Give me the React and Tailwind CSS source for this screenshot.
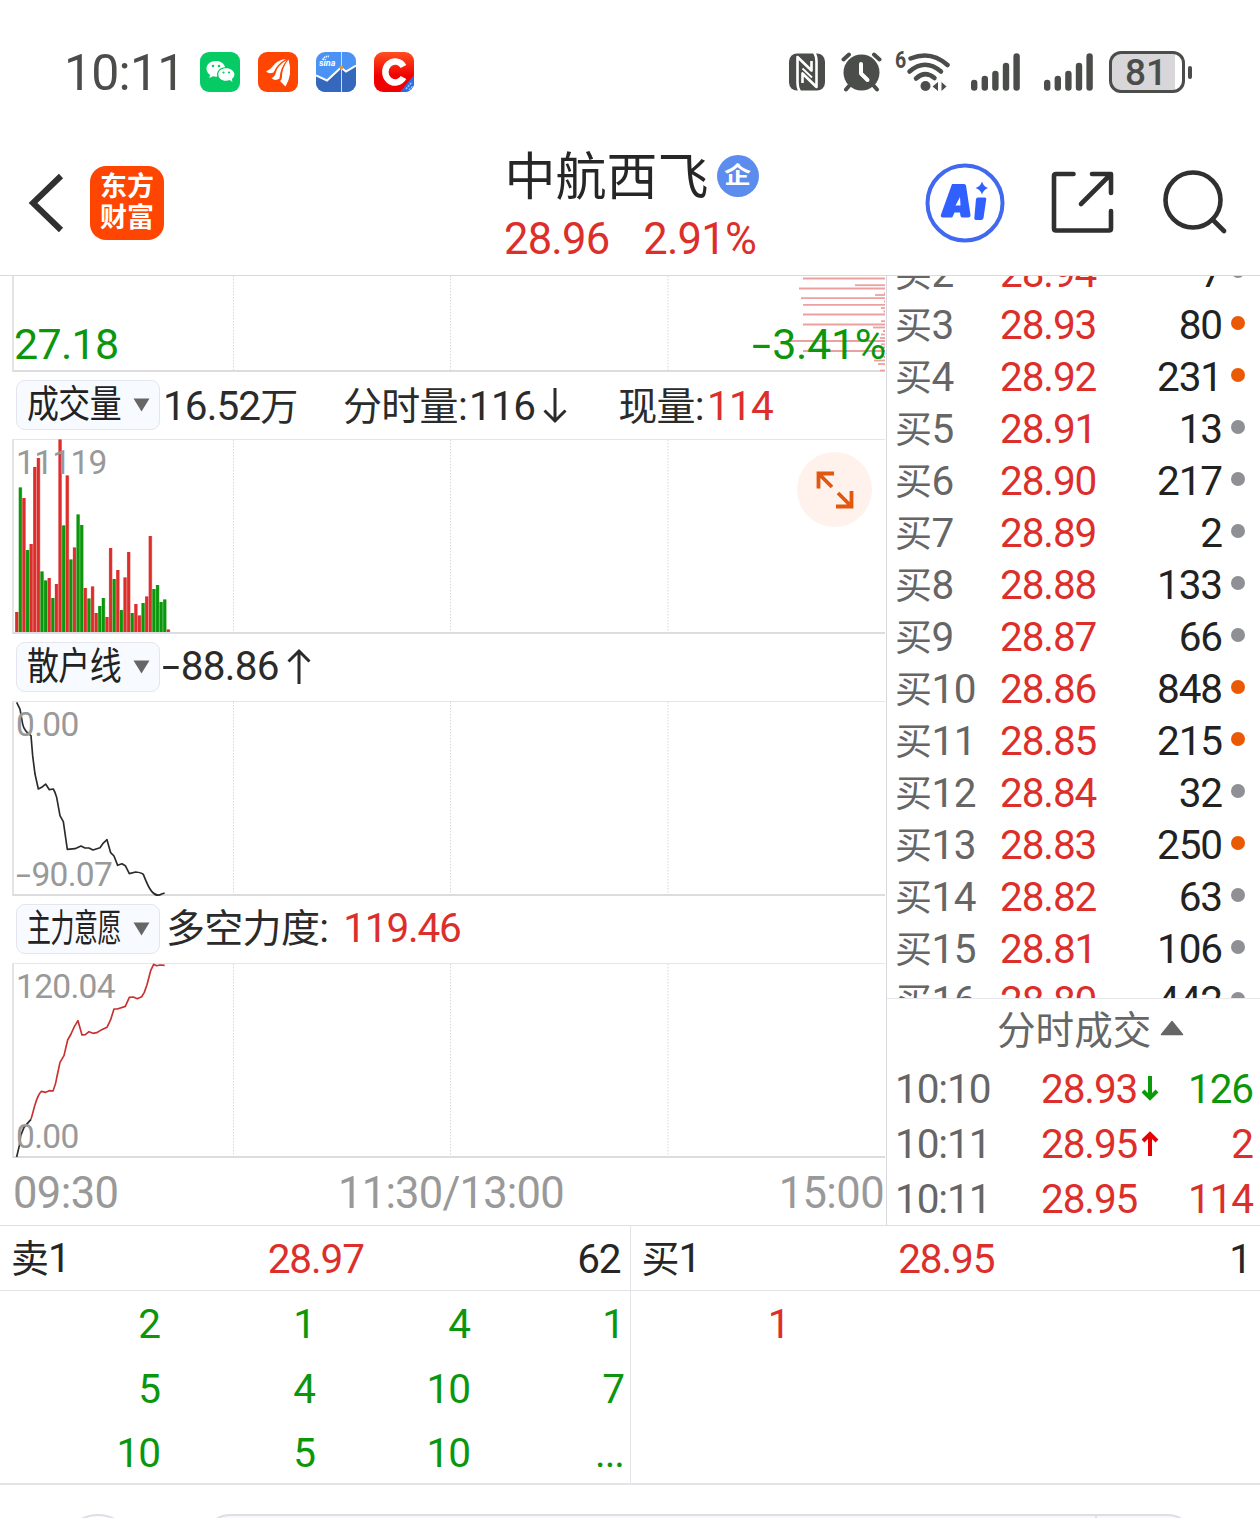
import clsx from 'clsx'

const BIDS = [
  ['买2', '28.94', '7', false],
  ['买3', '28.93', '80', true],
  ['买4', '28.92', '231', true],
  ['买5', '28.91', '13', false],
  ['买6', '28.90', '217', false],
  ['买7', '28.89', '2', false],
  ['买8', '28.88', '133', false],
  ['买9', '28.87', '66', false],
  ['买10', '28.86', '848', true],
  ['买11', '28.85', '215', true],
  ['买12', '28.84', '32', false],
  ['买13', '28.83', '250', true],
  ['买14', '28.82', '63', false],
  ['买15', '28.81', '106', false],
  ['买16', '28.80', '442', false],
]

const TRADES = [
  { time: '10:10', price: '28.93', dir: 'down', vol: '126' },
  { time: '10:11', price: '28.95', dir: 'up', vol: '2' },
  { time: '10:11', price: '28.95', dir: null, vol: '114' },
]

const ASKS = [
  ['2', '1', '4', '1'],
  ['5', '4', '10', '7'],
  ['10', '5', '10', '...'],
]

// one bar per minute: colour and height
const VOLUME =
  'r20 g144.5 r134 g82 r88 r165 r174 g60.5 g51.5 r54 g34 r48 r192.5 g106.5 r156.5 g72.5 r84.5 g117.5 g107 r44 g33.5 r45.5 r19 g26 g34 r15 r84 g53 r62 g22 r54.5 r80 g19 r28 r16.5 g29 r35.5 r96 g43 g47 g30 g32.5 r2.5'
    .split(' ')
    .map((v) => ({ up: v[0] === 'r', h: Number(v.slice(1)) }))

// [y, left edge], all end at the right side of the chart
const CHIPS = [
  [3, 803], [9.7, 855], [13, 799], [18, 884], [19.5, 875], [22.7, 801], [26, 884], [29.3, 803], [32.5, 881], [36, 883.5],
  [39, 803], [45.7, 881], [49, 803], [52, 873], [55.5, 883], [59, 881], [62.5, 880], [65.5, 790], [68.8, 881], [72, 883],
  [75.5, 803], [81.5, 883.5], [85, 874], [88.5, 878], [95, 880],
]

const GREEN = '#0c960c'
const RED = '#dc2f2c'

function StatusIcons() {
  return (
    <div className="flex h-[42px] items-center text-[#4b4d4a]">
      <svg width="36" height="38" viewBox="0 0 36 38">
        <rect x="0" y="0.5" width="36" height="37" rx="8" fill="currentColor" />
        <g fill="none" stroke="#fff" strokeWidth="2.600" strokeLinejoin="round">
          <path d="M11 39 Q8.500 35 8.500 30 V4 L22.500 17.500 V8" />
          <path d="M25 -1 Q27.500 3 27.500 8 V34 L13.500 20.500 V30" />
          <path d="M13.500 15.500 L23 24.500" strokeWidth="1.800" />
        </g>
      </svg>
      <svg className="ml-[16px]" width="41" height="40" viewBox="0 0 41 40">
        <g stroke="currentColor" strokeWidth="4" strokeLinecap="round">
          <path d="M2.500 7.500 L8 2.500 M33 2.500 L38.500 7.500 M8 34 L5 37.500 M33 34 L36 37.500" />
        </g>
        <circle cx="20.500" cy="20.500" r="18" fill="currentColor" />
        <path d="M20 12 V21.500 L26.500 28" fill="none" stroke="#fff" strokeWidth="4" strokeLinecap="round" strokeLinejoin="round" />
      </svg>
      <div className="relative ml-[13px]">
        <svg className="block" width="56" height="42" viewBox="0 0 56 42">
          <g fill="none" stroke="currentColor" strokeWidth="4.500" strokeLinecap="round">
            <path d="M15.500 7.500 Q36 -1 52.500 14" />
            <path d="M14.500 20.500 Q30 7 46 20.500" />
            <path d="M21 27.500 Q30 19 39.500 27" />
          </g>
          <circle cx="30.500" cy="35" r="5" fill="currentColor" />
          <path d="M37.500 35.500 L43 31 V40 Z M51.500 35.500 L46.500 31 V40 Z" fill="currentColor" />
        </svg>
        <span className="absolute -top-[2px] left-0 origin-left scale-x-[0.850] text-[23px] font-bold leading-[24px]">6</span>
      </div>
      {[0, 1].map((n) => (
        <svg key={n} className={n === 0 ? 'ml-[20px]' : 'ml-[24px]'} width="49" height="40" viewBox="0 0 49 40">
          <g stroke="currentColor" strokeWidth="6.400" strokeLinecap="round">
            <path d="M3.200 31 V35.500 M13.800 27 V35.500 M24.400 22 V35.500 M35 14 V35.500 M45.600 4.500 V35.500" />
          </g>
        </svg>
      ))}
      <div className="ml-[16px] flex h-[42px] w-[76px] items-center justify-center rounded-[12px] border-[3px] border-[#4b4d4a] bg-linear-to-r from-[#d9d6d9] from-90% to-white to-90% pr-[2px] text-[37px] font-medium leading-none">
        81
      </div>
      <div className="ml-[3px] h-[13px] w-[4px] rounded-full bg-[#4b4d4a]" />
    </div>
  )
}

function AppIcons() {
  return (
    <div className="flex gap-[18px]">
      <svg width="40" height="40" viewBox="0 0 40 40">
        <rect width="40" height="40" rx="9" fill="#06cb65" />
        <path d="M16 9 C10.500 9 6.500 12.300 6.500 16.700 C6.500 19.300 8 21.500 10 22.800 L9.300 26 L13 24.200 Q15 24.800 17.200 24.600 C16 19 20.500 15 25 15.200 C24.300 11.500 20.500 9 16 9 Z" fill="#fff" />
        <path d="M26 16.300 C21.500 16.300 18.300 19 18.300 22.500 C18.300 26 21.500 28.800 26 28.800 Q28 28.800 29.700 28.100 L32.400 30 L31.900 26.900 C33.500 25.700 34.400 24.200 34.400 22.500 C34.400 19 30.500 16.300 26 16.300 Z" fill="#fff" />
        <g fill="#06cb65">
          <circle cx="13" cy="14" r="1.300" />
          <circle cx="19" cy="14" r="1.300" />
          <circle cx="23.500" cy="20.500" r="1.100" />
          <circle cx="29" cy="20.500" r="1.100" />
        </g>
      </svg>
      <svg width="40" height="40" viewBox="0 0 40 40">
        <rect width="40" height="40" rx="9" fill="#ff4502" />
        <path d="M28 7 Q19 8 15 14 Q12 18 8 19.500 Q11 22.500 15.500 20.500 Q19 12 28 7 Z" fill="#fff" />
        <path d="M29 8 Q20 13 18 20 Q17 25 13.500 26 Q17 29.500 21.500 26.500 Q22 16 29 8 Z" fill="#fff" />
        <path d="M30.500 7.500 Q24 16 24 24 Q24 28 22 29 L27.500 34.500 Q35 22 30.500 7.500 Z" fill="#fff" />
      </svg>
      <svg width="40" height="40" viewBox="0 0 40 40">
        <defs><clipPath id="sina"><rect width="40" height="40" rx="9" /></clipPath></defs>
        <g clipPath="url(#sina)">
          <rect width="40" height="40" fill="#4b92f5" />
          <path d="M0 23 L11 28 L25 15 L30 19 L40 13 V40 H0 Z" fill="#3568bd" />
          <path d="M0 23.500 L11 28.500 L25 15.500 L30 19.500 L40 13.500" fill="none" stroke="#fff" strokeWidth="2" />
          <path d="M25.500 0 V40" stroke="#e8dcc8" strokeWidth="1" />
          <circle cx="25.300" cy="15.500" r="2" fill="#d79a4c" />
          <path d="M7 8 Q8 4 13 4.500" fill="none" stroke="#fff" strokeWidth="1.800" strokeDasharray="1.500 0.800" />
          <text x="3" y="14" fontSize="9" fontWeight="700" fontStyle="italic" fontFamily="Roboto" fill="#fff">sina</text>
        </g>
      </svg>
      <svg width="40" height="40" viewBox="0 0 40 40">
        <defs>
          <clipPath id="cls"><rect width="40" height="40" rx="9" /></clipPath>
          <linearGradient id="clsRed" x1="0" y1="0" x2="0" y2="1"><stop offset="0" stopColor="#ff5020" /><stop offset="0.600" stopColor="#f00000" /></linearGradient>
        </defs>
        <g clipPath="url(#cls)">
          <rect width="40" height="40" fill="url(#clsRed)" />
          <path d="M40 23 V40 H26 Z" fill="#2c6ee0" />
          <path d="M29.500 14.500 A9.800 10.500 0 1 0 29.500 25.500" fill="none" stroke="#fff" strokeWidth="6.500" />
          <path d="M32 37 L38 30 M35 38 L39 34" stroke="#9cc2ff" strokeWidth="1.500" strokeDasharray="2 1" />
        </g>
      </svg>
    </div>
  )
}

function Header() {
  return (
    <header className="flex h-[136px] border-b border-[#dadade]">
      <div className="flex w-[480px] pl-[28px] pt-[26px]">
        <svg className="mt-[7px]" width="36" height="60" viewBox="0 0 36 60">
          <path d="M33 3 L5 30 L33 57" fill="none" stroke="#303030" strokeWidth="6" />
        </svg>
        <div className="ml-[26px] flex h-[74px] w-[74px] flex-col items-center justify-center rounded-[16px] bg-[#ff4502] text-[27px] font-bold leading-[31px] text-white">
          <span>东方</span>
          <span>财富</span>
        </div>
      </div>
      <div className="flex w-[300px] flex-col items-center">
        <div className="flex items-center pl-[3px] pt-[4px]">
          <h1 className="pt-[3px] text-[51px] leading-[61px] text-[#262626]">中航西飞</h1>
          <span className="ml-[8px] flex h-[42px] w-[42px] items-center justify-center rounded-full bg-[#5c8cee] text-[27px] font-bold leading-none text-white">
            <span className="-mt-[2px] scale-y-[0.860]">企</span>
          </span>
        </div>
        <div className="flex gap-[34px] text-[43.500px] leading-[64px] tracking-[-0.800px] text-[#dc2f2c]">
          <span>28.96</span>
          <span>2.91%</span>
        </div>
      </div>
      <div className="flex flex-1 pl-[145px] pt-[23px]">
        <svg width="80" height="80" viewBox="0 0 80 80">
          <circle cx="40" cy="40" r="37.500" fill="none" stroke="#4169f0" strokeWidth="4" />
          <path fillRule="evenodd" d="M27 21 H39 Q40.500 21 41 22.500 L45.500 52 Q45.500 54.500 43 54.500 H37.500 Q36 54.500 35.500 53 L35 49.500 H29.500 L28 53 Q27.500 54.500 26 54.500 H18 Q15 54.500 16 51.500 Z M35 34 L30.500 42.500 H35.500 Z" fill="#3060ff" />
          <path d="M53 34.500 H60 Q61.500 34.500 61.300 36 L58.500 55 Q58 57 56 57 H51 Q49 57 49.300 55 L51 36 Q51.300 34.500 53 34.500 Z" fill="#3060ff" />
          <path d="M57 18.500 Q58.500 23.500 63 25 Q58.500 26.500 57 31.500 Q55.500 26.500 50.500 25 Q55.500 23.500 57 18.500 Z" fill="#3060ff" />
        </svg>
        <svg className="ml-[46px] mt-[8px]" width="64" height="64" viewBox="0 0 64 64">
          <path d="M22.500 3 H5 Q3 3 3 5 V57.500 Q3 59.500 5 59.500 H58 Q60 59.500 60 57.500 V40 M41 3 H60 V22 M59 4 L30 33" fill="none" stroke="#303030" strokeWidth="4.600" strokeLinecap="round" strokeLinejoin="round" />
        </svg>
        <svg className="ml-[48px] mt-[7px]" width="66" height="66" viewBox="0 0 66 66">
          <circle cx="30" cy="30" r="27.500" fill="none" stroke="#303030" strokeWidth="4.600" />
          <path d="M49.500 49.500 L61 61" stroke="#303030" strokeWidth="4.600" strokeLinecap="round" />
        </svg>
      </div>
    </header>
  )
}

function Grid({ height }) {
  return (
    <g>
      {[219.5, 436.5, 654].map((x) => (
        <path key={x} d={`M${x} 0 V${height}`} stroke="#d8d8dc" strokeWidth="1" strokeDasharray="1.500 1.500" />
      ))}
    </g>
  )
}

// numbers are set with a long dash in front
function Negative({ value }) {
  return (
    <span className="whitespace-nowrap">
      <span className="inline-block w-[0.460em] origin-left scale-x-[1.600]">-</span>
      {value}
    </span>
  )
}

function Panel({ children, top, bottom }) {
  return (
    <div className="relative ml-[12px] h-[195px] w-[873px] border-b-2 border-l-2 border-t border-b-[#dcdce0] border-l-[#e4e4e8] border-t-[#e6e6ea] text-[33.500px] leading-[40px] tracking-[-0.700px] text-[#999]">
      <svg className="block overflow-visible" width="871" height="192" viewBox="0 0 871 192">
        <Grid height={192} />
        {children}
      </svg>
      <span className="absolute left-[2px] top-[3px]">{top}</span>
      {bottom && <span className="absolute bottom-[-1px] left-[2px]">{bottom}</span>}
    </div>
  )
}

function Picker({ label }) {
  return (
    <div className="relative -mt-[2px] ml-[16px] h-[50px] w-[144px] rounded-[9px] border border-[#e4e5ee] bg-[#f7faff]">
      <span
        className={clsx(
          'absolute left-[10px] top-0 origin-left whitespace-nowrap text-[38px] leading-[46px] text-[#222]',
          label.length === 3 ? 'scale-x-[0.840]' : 'scale-x-[0.630]',
        )}
      >
        {label}
      </span>
      <svg className="absolute right-[9px] top-[17px]" width="17" height="14" viewBox="0 0 17 14">
        <path d="M0.500 0.500 H16.500 L8.500 13.500 Z" fill="#666" />
      </svg>
    </div>
  )
}

function Arrow({ up, className, width = 3, color = '#2b2b2b', w = 24, h = 36 }) {
  const mid = w / 2
  const head = mid - width / 2
  return (
    <svg className={className} width={w} height={h} viewBox={`0 0 ${w} ${h}`}>
      <path
        d={
          up
            ? `M${mid} ${h} V3 M${mid - head} ${3 + head} L${mid} 3 L${mid + head} ${3 + head}`
            : `M${mid} 0 V${h - 3} M${mid - head} ${h - 3 - head} L${mid} ${h - 3} L${mid + head} ${h - 3 - head}`
        }
        fill="none"
        stroke={color}
        strokeWidth={width}
      />
    </svg>
  )
}

function Charts() {
  return (
    <section className="h-[949px] w-[887px] border-r border-[#d8d8dc]">
      <div className="relative ml-[12px] h-[96px] w-[873px] border-b-2 border-l-2 border-b-[#dcdce0] border-l-[#e4e4e8] text-[43px] leading-[50px] text-[#0c960c]">
        <svg className="block overflow-visible" width="871" height="94" viewBox="0 0 871 94">
          <Grid height={94} />
          {CHIPS.map(([y, x]) => (
            <path key={y} d={`M${x - 14} ${y - 0.5} H871`} stroke="#eda0a0" strokeWidth="1.800" />
          ))}
        </svg>
        <span className="absolute left-0 top-[43px] tracking-[-0.700px]">27.18</span>
        <span className="absolute right-[-1px] top-[43px] tracking-[-0.300px]"><Negative value="3.41%" /></span>
      </div>

      <div className="flex h-[67px] items-center text-[40.500px] leading-[50px] tracking-[-0.700px] text-[#2b2b2b]">
        <Picker label="成交量" />
        <span className="ml-[3px] mt-px w-[180px] tracking-[-0.900px]">16.52<span className="text-[38px]">万</span></span>
        <span className="mt-px"><span className="text-[39px]">分时量</span>:<span className="pl-[2px]">116</span></span>
        <Arrow className="ml-[8px]" />
        <span className="ml-[51px] mt-px"><span className="text-[39px]">现量</span>:<span className="pl-[3px] text-[#dc2f2c]">114</span></span>
      </div>

      <div className="relative">
        <Panel top="11119">
          {VOLUME.map((bar, i) => (
            <g key={i} fill={bar.up ? RED : GREEN}>
              <rect x={1 + i * 3.61} y={192 - bar.h} width="3.600" height={bar.h} opacity="0.550" />
              <rect x={1.3 + i * 3.61} y={192 - bar.h} width="2.800" height={bar.h} />
            </g>
          ))}
        </Panel>
        <button className="absolute left-[797px] top-[13px] flex h-[75px] w-[75px] items-center justify-center rounded-full bg-[#fff1ec]">
          <svg width="38" height="38" viewBox="0 0 38 38">
            <path d="M2.500 17.500 V2.500 H18 M3 3 L16 16 M35.500 20 V35.500 H20 M35 35 L22 22" fill="none" stroke="#e2580f" strokeWidth="3.800" />
          </svg>
        </button>
      </div>

      <div className="flex h-[67px] items-center text-[40.500px] leading-[50px] tracking-[-0.700px] text-[#2b2b2b]">
        <Picker label="散户线" />
        <span className="-mt-[3px] ml-[2px]"><Negative value="88.86" /></span>
        <Arrow up className="-mt-[3px] ml-[8px]" />
      </div>

      <Panel top="0.00" bottom={<Negative value="90.07" />}>
        <path
          transform="translate(-14 -61.300) scale(0.3333)"
          d="M50 185 L60 205 L68 250 Q72 270 93 285 L98 345 L105 400 L115 445 L125 440 L137 430 L148 447 L160 445 Q166 455 170 470 L180 525 L190 543 L202 626 L225 624 L243 616 L255 622 L267 622 L279 628 L300 621 L310 607 L321 597 L332 636 L342 646 L353 674 L366 669 L376 675 L388 699 L407 694 Q425 696 430 701 Q445 740 455 752 Q470 770 485 760 L494 757"
          fill="none"
          stroke="#2b2b2b"
          strokeWidth="5"
          strokeLinejoin="round"
        />
      </Panel>

      <div className="flex h-[67px] items-center text-[40.500px] leading-[50px] tracking-[-0.700px] text-[#2b2b2b]">
        <Picker label="主力意愿" />
        <span className="-mt-[3px] ml-[6px]"><span className="text-[39px]">多空力度</span>:</span>
        <span className="-mt-[3px] ml-[15px] tracking-[-1.200px] text-[#dc2f2c]">119.46</span>
      </div>

      <Panel top="120.04" bottom="0.00">
        <g transform="translate(-14 -63.300) scale(0.3333)" fill="none" strokeWidth="5" strokeLinejoin="round">
          <path d="M50 769 L58 735 L62 705 L72 680 L93 656" stroke="#2b2b2b" />
          <path
            d="M93 656 L105 612 Q115 580 124 572 L137 575 L148 570 L159 571 Q168 550 170 532 L180 485 L192 465 L203 418 L213 400 L223 378 L234 360 L246 403 L256 402 L267 393 L279 398 L290 396 L302 389 L321 380 L332 357 L342 325 L352 325 L376 317 L388 290 L400 289 L412 294 L425 288 L433 275 L441 252 L452 210 L461 191 L470 195 L480 193 L494 194"
            stroke="#c8312f"
          />
        </g>
      </Panel>

      <div className="flex justify-between pl-[13px] pr-[2px] pt-[2px] text-[43.500px] leading-[68px] tracking-[-0.600px] text-[#999]">
        <span>09:30</span>
        <span className="pl-[5px] tracking-[-0.800px]">11:30/13:00</span>
        <span>15:00</span>
      </div>
    </section>
  )
}

function OrderBook() {
  return (
    <section className="h-[949px] flex-1">
      <div className="h-[723px] overflow-hidden border-b border-[#e8e8ec]">
        <div className="-mt-[29px]">
          {BIDS.map(([level, price, vol, big]) => (
            <div key={level} className="flex h-[52px] items-center pl-[8px] text-[40.500px] leading-[52px] tracking-[-1.100px]">
              <span className="mt-px w-[105px] tracking-[-0.500px] text-[#666]"><span className="text-[37px]">{level[0]}</span>{level.slice(1)}</span>
              <span className="text-[#dc2f2c]">{price}</span>
              <span className="flex-1 text-right text-[#222]">{vol}</span>
              <span className={clsx('mb-[4px] ml-[9px] mr-[15px] h-[14px] w-[14px] rounded-full', big ? 'bg-[#ea5a05]' : 'bg-[#8f8f96]')} />
            </div>
          ))}
        </div>
      </div>
      <div className="flex h-[63px] items-center pl-[110px] text-[#666]">
        <span className="text-[38.600px] leading-[60px]">分时成交</span>
        <svg className="mb-[6px] ml-[9px]" width="24" height="16" viewBox="0 0 24 16">
          <path d="M1.500 14.500 L12 1.500 L22.500 14.500 Z" fill="#666" stroke="#666" strokeWidth="1.500" strokeLinejoin="round" />
        </svg>
      </div>
      {TRADES.map((t, i) => (
        <div key={i} className="flex h-[55px] items-center pl-[8px] pr-[7px] text-[40.500px] leading-[55px] tracking-[-1.100px] text-[#dc2f2c]">
          <span className="w-[146px] text-[#666]">{t.time}</span>
          <span>{t.price}</span>
          {t.dir && (
            <Arrow up={t.dir === 'up'} className="ml-[4px] mb-[3px]" width={4} w={18} h={25} color={t.dir === 'up' ? '#e60000' : '#0a9a0a'} />
          )}
          <span className={clsx('flex-1 text-right', t.dir === 'down' && 'text-[#0c960c]')}>{t.vol}</span>
        </div>
      ))}
    </section>
  )
}

function Quote({ side, price, vol, children }) {
  return (
    <div className="flex-1 first:border-r first:border-[#e4e4e8]">
      <div className="grid h-[65px] grid-cols-3 items-center border-b border-[#e4e4e8] pl-[11px] pr-[9px] text-[40.500px] leading-[64px] tracking-[-1.100px] text-[#262626]">
        <span><span className="text-[38px]">{side[0]}</span>{side[1]}</span>
        <span className="text-center text-[#dc2f2c]">{price}</span>
        <span className="text-right">{vol}</span>
      </div>
      {children}
    </div>
  )
}

export default function App() {
  return (
    <div className="h-[1518px] w-[1260px] overflow-hidden bg-white font-['Roboto','Noto_Sans_CJK_SC',sans-serif]">
      <div className="flex h-[140px] items-center pl-[64px] pr-[68px] pt-[4px]">
        <span className="w-[136px] pt-[2px] text-[50px] leading-[60px] tracking-[-0.800px] text-[#4b4d4a]">10:11</span>
        <AppIcons />
        <div className="flex-1" />
        <StatusIcons />
      </div>
      <Header />
      <main className="flex border-b border-[#e0e0e4]">
        <Charts />
        <OrderBook />
      </main>
      <div className="flex h-[259px] border-b-2 border-[#e4e4e8]">
        <Quote side="卖1" price="28.97" vol="62">
          {ASKS.map((row, i) => (
            <div key={i} className="grid h-[64.500px] grid-cols-[160px_155px_155px_154px] text-right text-[40.500px] leading-[67px] tracking-[-1px] text-[#0c960c]">
              {row.map((v, j) => <span key={j}>{v}</span>)}
            </div>
          ))}
        </Quote>
        <Quote side="买1" price="28.95" vol="1">
          <div className="w-[160px] text-right text-[40.500px] leading-[67px] text-[#dc2f2c]">1</div>
        </Quote>
      </div>
      <div className="flex pl-[62px] pt-[29px]">
        <div className="h-[72px] w-[72px] rounded-full border-2 border-[#dedee6]" />
        <div className="ml-[70px] flex h-[72px] w-[990px] rounded-[26px] border-2 border-[#dedee6] bg-[#f7f8ff]">
          <div className="w-[891px] border-r-2 border-[#dedee6]" />
        </div>
      </div>
    </div>
  )
}
